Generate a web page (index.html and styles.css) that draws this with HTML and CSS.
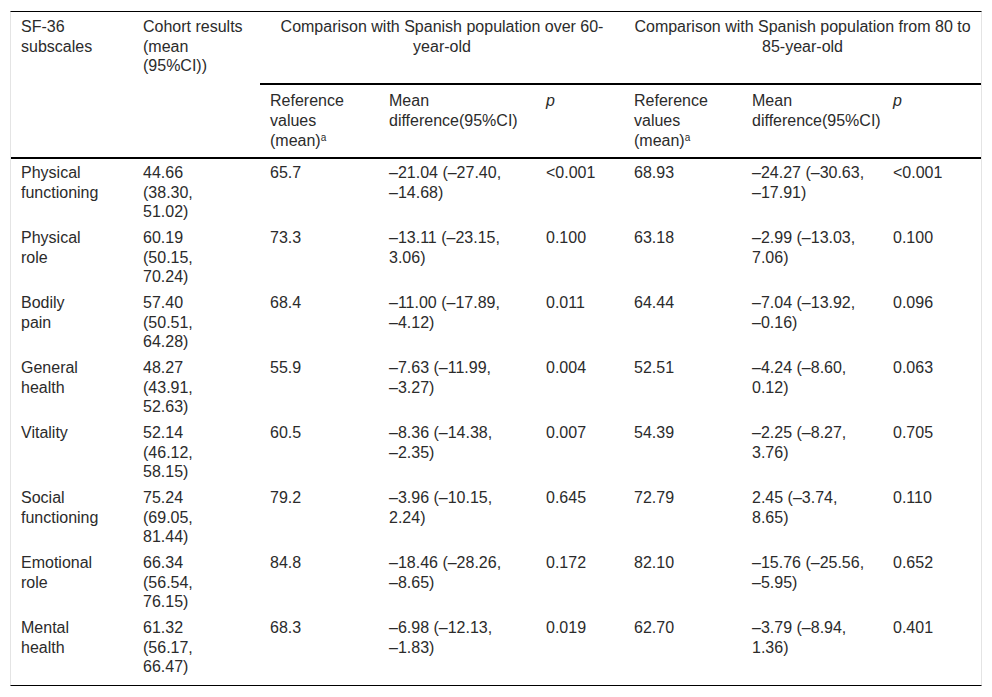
FILE: index.html
```html
<!DOCTYPE html>
<html lang="en">
<head>
<meta charset="utf-8">
<title>SF-36 subscales</title>
<link rel="stylesheet" href="styles.css">
</head>
<body>
<div class="table-wrap">
  <table class="data">
    <colgroup>
      <col class="c1"><col class="c2"><col class="c3"><col class="c4"><col class="c5"><col class="c6"><col class="c7"><col class="c8">
    </colgroup>
    <thead>
      <tr class="h1">
        <th rowspan="2" class="rule"><span class="stack">SF-36 subscales</span></th>
        <th rowspan="2" class="rule">Cohort results (mean (95%CI))</th>
        <th colspan="3" class="group rule">Comparison with Spanish population over 60-year-old</th>
        <th colspan="3" class="group rule">Comparison with Spanish population from 80 to 85-year-old</th>
      </tr>
      <tr class="h2">
        <th class="rule">Reference values (mean)<sup>a</sup></th>
        <th class="rule">Mean difference(95%CI)</th>
        <th class="rule"><i>p</i></th>
        <th class="rule">Reference values (mean)<sup>a</sup></th>
        <th class="rule tight">Mean difference(95%CI)</th>
        <th class="rule"><i>p</i></th>
      </tr>
    </thead>
    <tbody>
      <tr>
        <td><span class="stack">Physical functioning</span></td>
        <td><span class="stack">44.66 (38.30, 51.02)</span></td>
        <td>65.7</td>
        <td>–21.04 (–27.40,<br>–14.68)</td>
        <td>&lt;0.001</td>
        <td>68.93</td>
        <td>–24.27 (–30.63,<br>–17.91)</td>
        <td>&lt;0.001</td>
      </tr>
      <tr>
        <td><span class="stack">Physical role</span></td>
        <td><span class="stack">60.19 (50.15, 70.24)</span></td>
        <td>73.3</td>
        <td>–13.11 (–23.15,<br>3.06)</td>
        <td>0.100</td>
        <td>63.18</td>
        <td>–2.99 (–13.03,<br>7.06)</td>
        <td>0.100</td>
      </tr>
      <tr>
        <td><span class="stack">Bodily pain</span></td>
        <td><span class="stack">57.40 (50.51, 64.28)</span></td>
        <td>68.4</td>
        <td>–11.00 (–17.89,<br>–4.12)</td>
        <td>0.011</td>
        <td>64.44</td>
        <td>–7.04 (–13.92,<br>–0.16)</td>
        <td>0.096</td>
      </tr>
      <tr>
        <td><span class="stack">General health</span></td>
        <td><span class="stack">48.27 (43.91, 52.63)</span></td>
        <td>55.9</td>
        <td>–7.63 (–11.99,<br>–3.27)</td>
        <td>0.004</td>
        <td>52.51</td>
        <td>–4.24 (–8.60,<br>0.12)</td>
        <td>0.063</td>
      </tr>
      <tr>
        <td><span class="stack">Vitality</span></td>
        <td><span class="stack">52.14 (46.12, 58.15)</span></td>
        <td>60.5</td>
        <td>–8.36 (–14.38,<br>–2.35)</td>
        <td>0.007</td>
        <td>54.39</td>
        <td>–2.25 (–8.27,<br>3.76)</td>
        <td>0.705</td>
      </tr>
      <tr>
        <td><span class="stack">Social functioning</span></td>
        <td><span class="stack">75.24 (69.05, 81.44)</span></td>
        <td>79.2</td>
        <td>–3.96 (–10.15,<br>2.24)</td>
        <td>0.645</td>
        <td>72.79</td>
        <td>2.45 (–3.74,<br>8.65)</td>
        <td>0.110</td>
      </tr>
      <tr>
        <td><span class="stack">Emotional role</span></td>
        <td><span class="stack">66.34 (56.54, 76.15)</span></td>
        <td>84.8</td>
        <td>–18.46 (–28.26,<br>–8.65)</td>
        <td>0.172</td>
        <td>82.10</td>
        <td>–15.76 (–25.56,<br>–5.95)</td>
        <td>0.652</td>
      </tr>
      <tr>
        <td><span class="stack">Mental health</span></td>
        <td><span class="stack">61.32 (56.17, 66.47)</span></td>
        <td>68.3</td>
        <td>–6.98 (–12.13,<br>–1.83)</td>
        <td>0.019</td>
        <td>62.70</td>
        <td>–3.79 (–8.94,<br>1.36)</td>
        <td>0.401</td>
      </tr>
    </tbody>
  </table>
</div>
</body>
</html>
```

FILE: styles.css
```css
html, body {
  margin: 0;
  padding: 0;
  background: #ffffff;
}

body {
  font-family: "Liberation Sans", Arial, sans-serif;
  font-size: 16px;
  line-height: 19.5px;
  color: #2b2b2b;
}

.table-wrap {
  width: 970px;
  margin: 11px 0 0 10px;
  border-top: 1px solid #000000;
  border-bottom: 1px solid #000000;
  border-left: 1px solid #e4e4e4;
  border-right: 1px solid #e4e4e4;
  padding-bottom: 6px;
}

.data {
  width: 970px;
  table-layout: fixed;
  border-collapse: separate;
  border-spacing: 0;
}

.c1 { width: 122px; }
.c2 { width: 127px; }
.c3 { width: 119px; }
.c4 { width: 157px; }
.c5 { width: 88px; }
.c6 { width: 118px; }
.c7 { width: 141px; }
.c8 { width: 98px; }

.data th,
.data td {
  text-align: left;
  vertical-align: top;
  font-weight: normal;
  padding: 5px 10px 0 10px;
}

.data th.tight {
  padding-right: 0;
}

.data th.group {
  text-align: center;
}

.data th.rule {
  border-bottom: 2px solid #000000;
}

.h1 { height: 73px; }
.h2 { height: 74px; }

.h2 th {
  padding-top: 6px;
  line-height: 20px;
}

.data tbody tr {
  height: 65px;
}

.data td {
  padding-top: 4px;
}

.stack {
  display: block;
  width: min-content;
}

sup {
  font-size: 10px;
  line-height: 0;
  vertical-align: 5px;
}
```
